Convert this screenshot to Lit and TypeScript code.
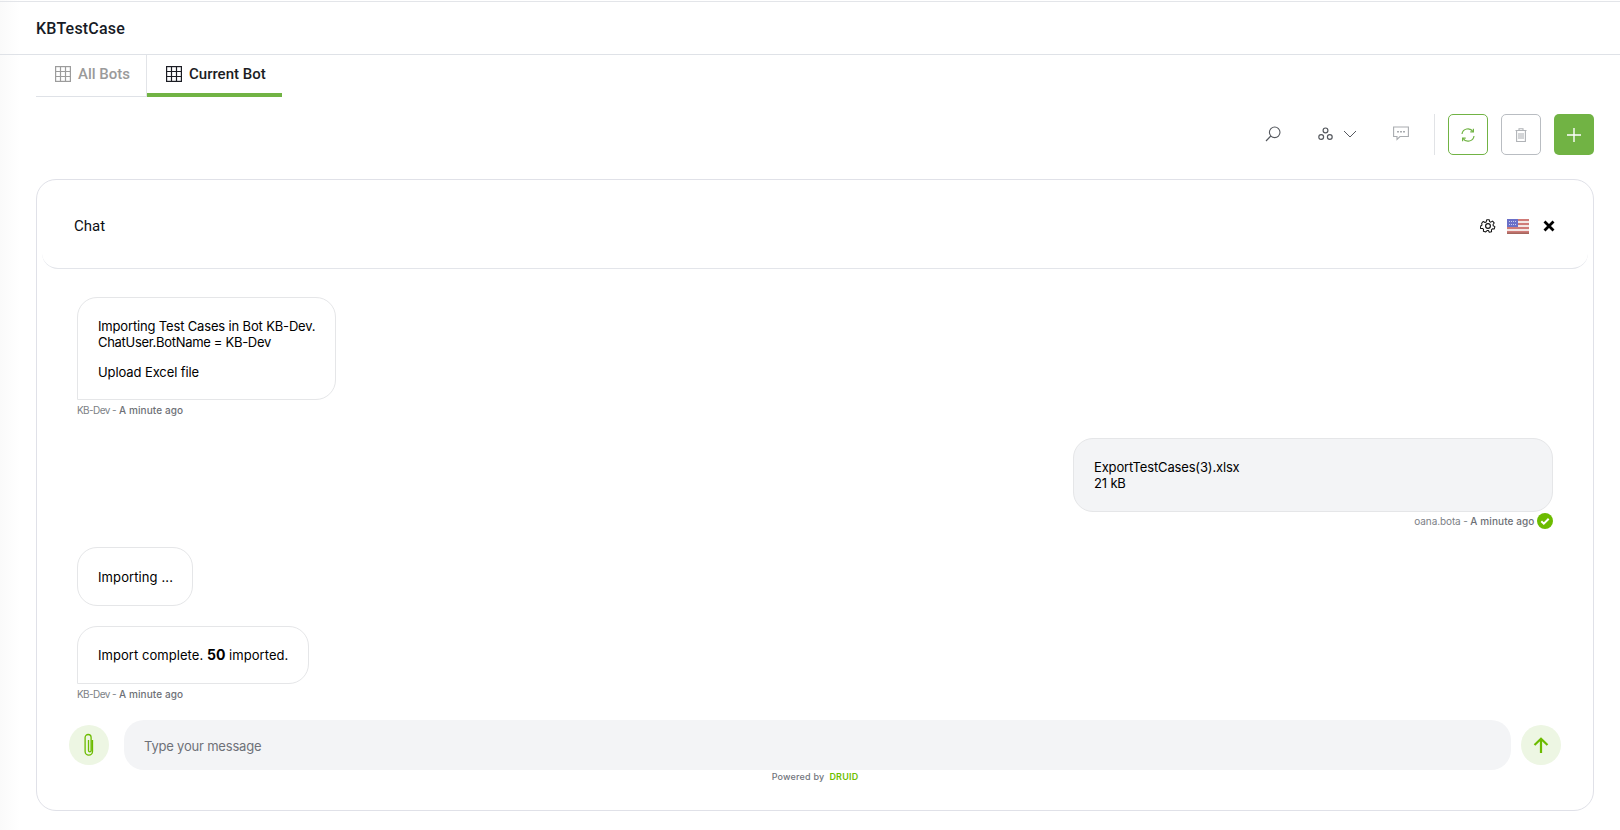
import { LitElement, html, css, svg } from "lit";
import { customElement } from "lit/decorators.js";

const grid = html`<svg class="gi" viewBox="0 0 16 16" width="16" height="16" fill="none" stroke="currentColor" stroke-width="1.2"><rect x=".6" y=".6" width="14.8" height="14.8"/><path d="M5.5 .6v14.8M10.5 .6v14.8M.6 5.5h14.8M.6 10.5h14.8"/></svg>`;

@customElement("app-root")
export class AppRoot extends LitElement {
  static styles = css`
    :host { display: block; width: 1620px; height: 830px; overflow: hidden; background: linear-gradient(90deg, #fafafa, #fff 20px); font-family: Inter, "Liberation Sans", sans-serif; color: #000; box-sizing: border-box; }
    * { box-sizing: border-box; }
    .top { height: 54px; margin-top: 1px; border-top: 1px solid #e3e5e9; border-bottom: 1px solid #dfe2e7; padding: 0 36px; display: flex; align-items: center; font: 500 16px Roboto, sans-serif; letter-spacing: .2px; color: #171b26; }
    .tabs { display: flex; margin: 0 36px; height: 42px; width: 246px; font: 500 15px Roboto, sans-serif; }
    .tab { display: flex; align-items: center; gap: 7px; height: 42px; }
    .tab.off { width: 111px; padding: 0 0 2.5px 19px; color: #9a9a9a; border-right: 1px solid #e2e4e8; border-bottom: 1.5px solid #dfe2e7; }
    .tab.on { width: 135px; padding-left: 19px; color: #1b1d24; border-bottom: 4px solid #71b344; }
    .tab.off .gi { color: #9c9c9c; }
    .tools { display: flex; align-items: center; justify-content: flex-end; margin: 17px 26px 0 0; height: 41px; }
    .ic { display: flex; align-items: center; justify-content: center; }
    .search { width: 16px; margin-right: 37px; margin-top: -2px; }
    .nodes { margin-right: 36px; gap: 10px; margin-top: -2px; }
    .cmt { margin-right: 25px; margin-top: -2px; }
    .sep { width: 1px; height: 41px; background: #e1e3e6; margin-right: 13px; }
    .btn { width: 40px; height: 41px; border-radius: 5px; display: flex; align-items: center; justify-content: center; margin-right: 13px; border: 1px solid #b9bdc2; background: #fff; }
    .btn.ref { border-color: #71b344; }
    .btn.add { background: #71b344; border: none; margin-right: 0; }
    .card { margin: 24px 26px 0 36px; height: 632px; border: 1px solid #e0e1e8; border-radius: 20px; background: #fff; display: flex; flex-direction: column; }
    .head { height: 89px; margin: 0 5px; padding: 4px 30px 0 32px; border-bottom: 1px solid #e3e5ea; border-radius: 0 0 16px 16px; display: flex; align-items: center; justify-content: space-between; font: 400 15px Roboto, sans-serif; color: #0b0f14; }
    .hicons { display: flex; align-items: center; gap: 11px; }
    .msgs { flex: 1; padding: 28px 40px 0; display: flex; flex-direction: column; align-items: flex-start; font-size: 13px; line-height: 16px; letter-spacing: -.16px; white-space: nowrap; }
    .b { border: 1px solid #e5e6e8; border-radius: 20px; padding: 20px; background: #fff; }
    .b.l { border-bottom-left-radius: 0; }
    .b p { margin: 0; }
    .b p + p { margin-top: 14px; }
    .tight { letter-spacing: -.3px; }
    .m1 { width: 259px; height: 103px; padding-top: 20px; }
    .m1 p + p { letter-spacing: -.1px; }
    .meta { font-size: 10px; line-height: 12px; letter-spacing: -.1px; color: #7c7f86; margin-top: 4px; height: 12px; white-space: nowrap; display: flex; align-items: center; gap: 3px; }
    .meta.s { letter-spacing: -.6px; }
    .meta b { font-weight: 500; color: #6d7076; letter-spacing: .1px; }
    .me { width: 480px; height: 74px; background: #f3f4f6; align-self: flex-end; margin-top: 22px; padding-top: 20px; }
    .meta.r { align-self: flex-end; margin-top: 1px; height: 16px; gap: 2.5px; }
    .m3 { width: 116px; height: 59px; margin-top: 18px; padding-top: 21px; letter-spacing: .1px; }
    .m4 { width: 232px; height: 58px; margin-top: 20px; padding-top: 20px; letter-spacing: .05px; }
    .m4 b { font-weight: 700; font-size: 14px; }
    .foot { display: flex; align-items: center; padding: 0 32px; gap: 15px; height: 50px; }
    .circ { width: 40px; height: 40px; border-radius: 50%; background: #edf6e3; display: flex; align-items: center; justify-content: center; flex: none; }
    .inp { flex: 1; height: 50px; border-radius: 20px; background: #f3f4f6; display: flex; align-items: center; padding: 2px 0 0 20px; font-size: 13px; letter-spacing: -.2px; color: #6e7178; margin-right: -5px; }
    .pow { height: 40px; padding-top: 1px; text-align: center; font-size: 9px; line-height: 12px; color: #71757c; letter-spacing: .2px; display: flex; justify-content: center; gap: 5px; font-weight: 500; }
    .pow span { color: #6fc000; font-weight: 600; }
  `;
  render() {
    return html`
      <div class="top">KBTestCase</div>
      <div class="tabs">
        <div class="tab off">${grid}<span>All Bots</span></div>
        <div class="tab on">${grid}<span>Current Bot</span></div>
      </div>
      <div class="tools">
        <div class="ic search"><svg width="16" height="16" viewBox="0 0 16 16" fill="none" stroke="#55585e" stroke-width="1.1"><circle cx="9.7" cy="6.3" r="5.3"/><path d="M5.8 10 1 15"/></svg></div>
        <div class="ic nodes"><svg width="15" height="14" viewBox="0 0 15 14" fill="none" stroke="#55585e" stroke-width="1.2"><circle cx="7.5" cy="3.4" r="2.4"/><circle cx="3.2" cy="10" r="2.4"/><circle cx="11.8" cy="10" r="2.4"/></svg><svg width="14" height="8" viewBox="0 0 14 8" fill="none" stroke="#55585e" stroke-width="1"><path d="M1 1l6 6 6-6"/></svg></div>
        <div class="ic cmt"><svg width="16" height="15" viewBox="0 0 16 15" fill="none" stroke="#a9acb0" stroke-width="1.1"><path d="M.6 1h14.8v9.5H7l-3 3v-3H.6z"/><path d="M4 5.7h2M7 5.7h2M10 5.7h2" stroke-width="1.4"/></svg></div>
        <div class="sep"></div>
        <div class="btn ref"><svg width="14" height="14" viewBox="0 0 14 14" fill="none" stroke="#71b344" stroke-width="1.2"><path d="M1 6A6 6 0 0 1 12 3.6M13 8A6 6 0 0 1 2 10.4"/><path d="M12.4 .8v3.1H9.3M1.6 13.2v-3.1h3.1"/></svg></div>
        <div class="btn"><svg width="12" height="14" viewBox="0 0 12 14" fill="none" stroke="#b0b3b7" stroke-width="1.1"><path d="M.5 2.500h11M4 2.500V.8h4v1.700M1.600 2.500v11h8.800v-11M4 5v6M6 5v6M8 5v6"/></svg></div>
        <div class="btn add"><svg width="14" height="14" viewBox="0 0 14 14" fill="none" stroke="#fff" stroke-width="1.4"><path d="M7 0v14M0 7h14"/></svg></div>
      </div>
      <div class="card">
        <div class="head">
          <span>Chat</span>
          <div class="hicons">
            <svg width="16" height="16" viewBox="0 0 24 24" fill="none" stroke="#111" stroke-width="1.7" stroke-linejoin="round"><circle cx="12" cy="12" r="3.6"/><path d="M10 1.500h4l.7 3.200 2 .9 2.900-1.700 2.700 3-1.900 2.600.3 2.200 2.800 1.300-1 3.900-3.200-.2-1.600 1.600.3 3.200-3.900 1-1.400-2.900h-2.200L8.200 21.900l-3.900-1 .3-3.200-1.600-1.600-3.200.2-1-3.900 2.800-1.300.3-2.200L1.400 7.400l2.700-3 2.900 1.700 2-.9z" transform="translate(1.200 1.200) scale(.9)"/></svg>
            <svg width="22" height="15" viewBox="0 0 22 15">
              <rect width="22" height="15" fill="#cf7b78"/>
              ${[2, 6, 10].map((y) => svg`<rect y=${y} width="22" height="2" fill="#f3e6e4"/>`)}
              <rect y="13.500" width="22" height="1.500" fill="#a5665d"/>
              <rect width="11" height="8" fill="#6a70c8"/>
              <path d="M2 2.500h7M2 5.500h7" stroke="#c9ccef" stroke-dasharray="1 1"/>
            </svg>
            <svg width="18" height="14" viewBox="0 0 18 14" fill="none" stroke="#000" stroke-width="2.800"><path d="M4.500 2.500l9 9M13.500 2.500l-9 9"/></svg>
          </div>
        </div>
        <div class="msgs">
          <div class="b l m1"><p>Importing Test Cases in Bot KB-Dev.<br /><span class="tight">ChatUser.BotName = KB-Dev</span></p><p>Upload Excel file</p></div>
          <div class="meta s">KB-Dev - <b>A minute ago</b></div>
          <div class="b me">ExportTestCases(3).xlsx<br />21 kB</div>
          <div class="meta r">oana.bota - <b>A minute ago</b><svg width="16" height="16" viewBox="0 0 16 16"><circle cx="8" cy="8" r="8" fill="#6cbb00"/><path d="M4.300 8.200l2.500 2.500 4.900-5" fill="none" stroke="#fff" stroke-width="2"/></svg></div>
          <div class="b m3">Importing ...</div>
          <div class="b l m4">Import complete. <b>50</b> imported.</div>
          <div class="meta s">KB-Dev - <b>A minute ago</b></div>
        </div>
        <div class="foot">
          <div class="circ"><svg width="12" height="24" viewBox="0 0 12 24" fill="none" stroke="#6cbb00" stroke-width="1.300"><path d="M9.500 7v11.500a3.700 3.700 0 0 1-7.400 0V4.500a3 3 0 0 1 6 0v13a1.300 1.300 0 0 1-2.600 0V7"/></svg></div>
          <div class="inp">Type your message</div>
          <div class="circ"><svg width="16" height="16" viewBox="0 0 16 16" fill="none" stroke="#6cbb00" stroke-width="2.200"><path d="M8 16V2M1.500 8L8 1.800 14.500 8"/></svg></div>
        </div>
        <div class="pow">Powered by <span>DRUID</span></div>
      </div>
    `;
  }
}
